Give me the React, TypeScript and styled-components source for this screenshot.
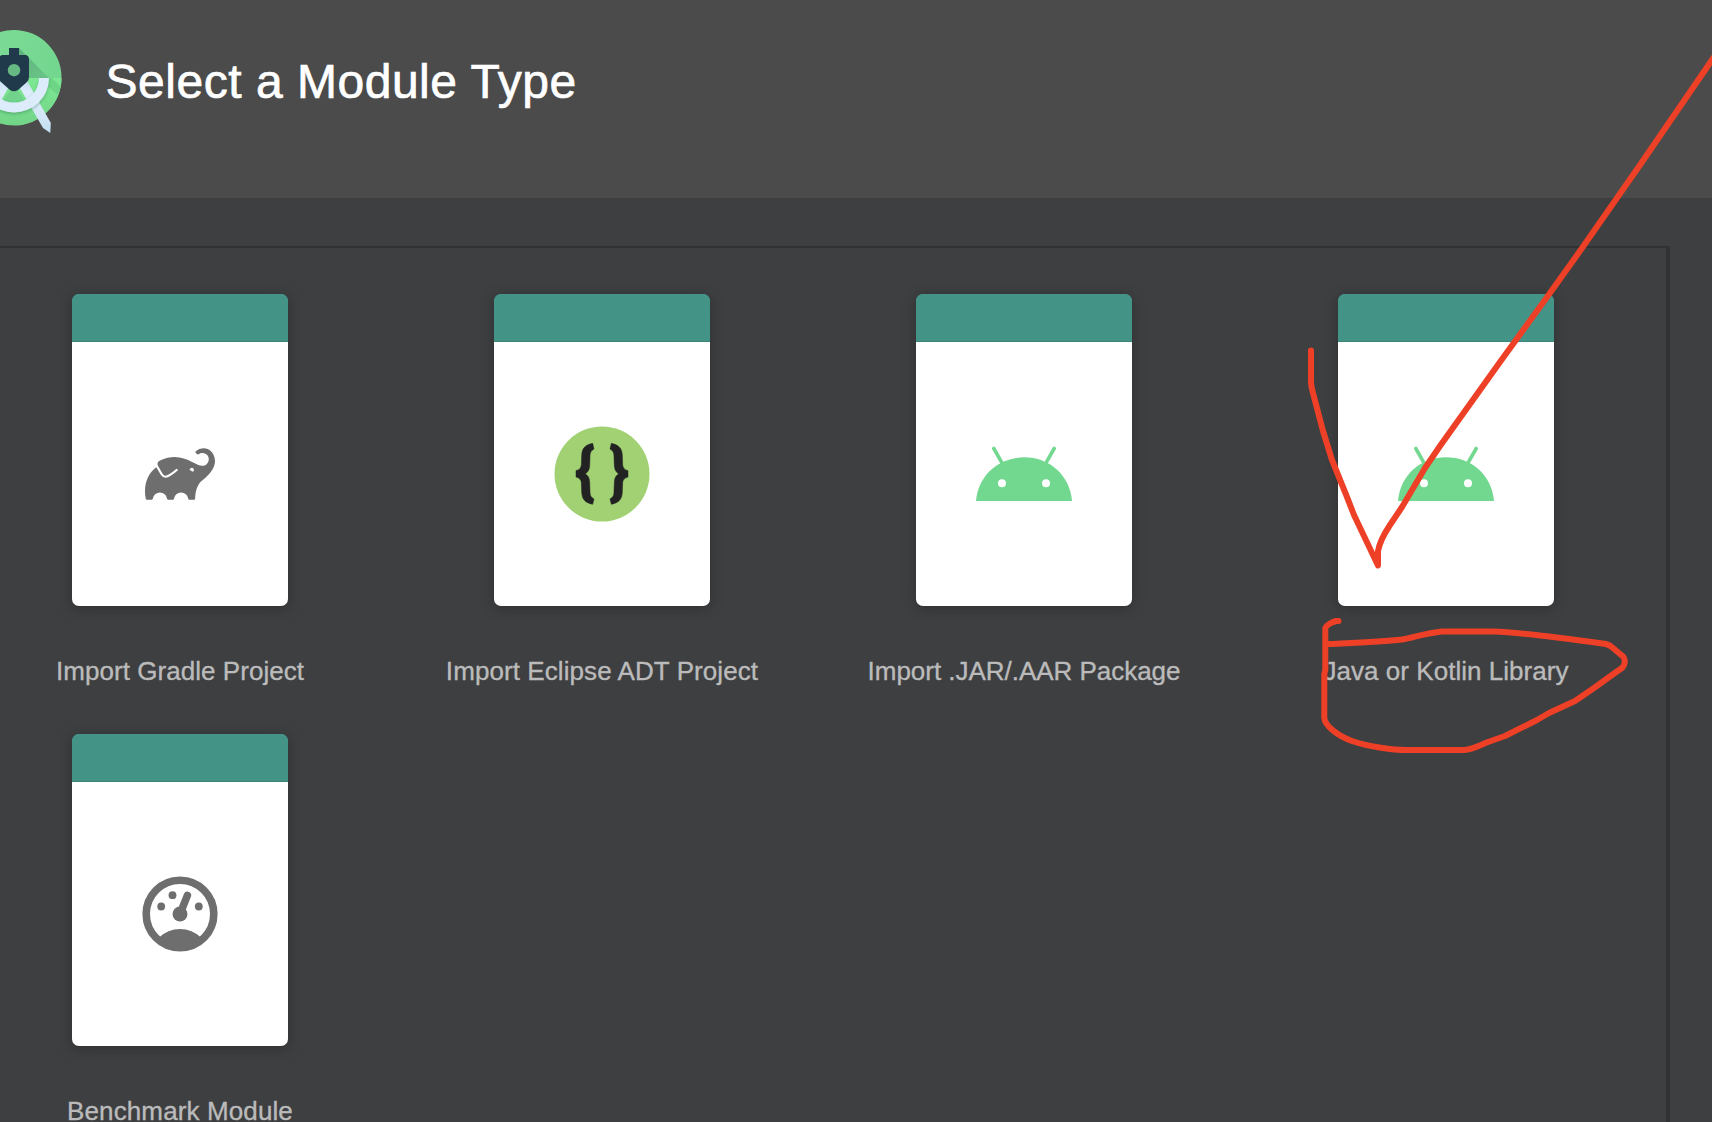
import React from "react";
import styled, { createGlobalStyle } from "styled-components";
import { SiGradle } from "react-icons/si";

const GlobalStyle = createGlobalStyle`
  html, body { margin: 0; background: #3e3f41; overflow: hidden; }
  * { box-sizing: border-box; }
`;

const Window = styled.div`
  position: relative;
  display: flex;
  flex-direction: column;
  width: 1712px;
  height: 1122px;
  overflow: hidden;
  background: #3e3f41;
  font-family: "Liberation Sans", Helvetica, Arial, sans-serif;
`;

const Header = styled.header`
  display: flex;
  flex: none;
  height: 198px;
  background: #4b4b4b;
`;

const Logo = styled.svg`
  flex: none;
  width: 80px;
  height: 140px;
`;

const Title = styled.h1`
  margin: 54px 0 0 25.5px;
  font-size: 48px;
  line-height: 56px;
  font-weight: 400;
  letter-spacing: 0.52px;
  color: #fff;
  white-space: nowrap;
  -webkit-text-stroke: 0.7px #fff;
`;

const Gallery = styled.main`
  flex: none;
  width: 1670px;
  height: 876px;
  margin-top: 48px;
  border-top: 2px solid #313233;
  border-right: 4px solid #313233;
`;

const Grid = styled.div`
  display: grid;
  grid-template-columns: repeat(4, 422px);
  grid-auto-rows: 440px;
  margin-left: -31px;
  padding-top: 46px;
`;

const Module = styled.div`
  display: flex;
  flex-direction: column;
  align-items: center;
`;

const Card = styled.div`
  display: flex;
  flex-direction: column;
  width: 216px;
  height: 312px;
  border-radius: 7px;
  overflow: hidden;
  background: linear-gradient(#439487 48px, #fff 48px);
  box-shadow: 0 2px 14px rgba(0, 0, 0, 0.26);
`;

const CardBar = styled.div`
  flex: none;
  height: 48px;
  background: #439487;
  border-bottom: 1px solid #3c857a;
`;

const CardBody = styled.div`
  flex: 1;
  display: flex;
  align-items: center;
  justify-content: center;
  color: #6e6e6e;
`;

const Label = styled.div<{ $spacing: number }>`
  margin-top: 49px;
  font-size: 26px;
  line-height: 32px;
  letter-spacing: ${(p) => p.$spacing}px;
  color: #bbbbbb;
  white-space: nowrap;
  -webkit-text-stroke: 0.35px #bbbbbb;
`;

const Icon = styled.svg`
  width: 96px;
  height: 96px;
  display: block;
`;

const Ink = styled.svg`
  position: absolute;
  inset: 0;
  width: 1712px;
  height: 1122px;
  pointer-events: none;
`;

const StudioLogo = () => (
  <Logo viewBox="0 0 80 140">
    <defs>
      <linearGradient id="disc" x1="0" y1="0" x2="1" y2="0">
        <stop offset="0.3" stopColor="#7bdb96" />
        <stop offset="1" stopColor="#73d68f" />
      </linearGradient>
      <linearGradient id="lower" x1="0" y1="0" x2="0" y2="1">
        <stop offset="0" stopColor="#7de893" />
        <stop offset="1" stopColor="#73d488" />
      </linearGradient>
      <linearGradient id="cast" x1="0" y1="0" x2="1" y2="1">
        <stop offset="0" stopColor="#5cae79" />
        <stop offset="1" stopColor="#6bc688" />
      </linearGradient>
      <linearGradient id="leg" x1="0" y1="0" x2="0" y2="1">
        <stop offset="0" stopColor="#c6e0f4" />
        <stop offset="0.25" stopColor="#dcecfb" />
        <stop offset="0.6" stopColor="#d6e8f8" />
        <stop offset="1" stopColor="#c0dff0" />
      </linearGradient>
      <filter id="soft" x="-30%" y="-30%" width="160%" height="160%">
        <feDropShadow dx="0" dy="1.5" stdDeviation="1.5" floodColor="#246b42" floodOpacity="0.4" />
      </filter>
    </defs>
    <circle cx="14" cy="77.500" r="47.500" fill="url(#disc)" />
    <path d="M-33.500 78 H61.500 A47.500 47.500 0 0 1 -33.500 78Z" fill="url(#lower)" />
    <path d="M19 48 L49 78 H14 V55Z" fill="url(#cast)" />
    <path d="M49 78 H52 L60.500 86.500 L58 95 L45 84Z" fill="#6ed486" />
    <path d="M14 86 L3 100.500 V103 H25 V100.500Z" fill="#70d28b" />
    <path d="M17 83 L26 79 L50.800 123 L50.300 133 L43 128Z" fill="url(#leg)" />
    <path d="M11 83 L2 79 L-22 123 L-21 133 L-14.500 128Z" fill="url(#leg)" />
    <g filter="url(#soft)">
      <path d="M39 78 H49 A35 34.500 0 0 1 -21 78 H-11 A25 24.500 0 0 0 39 78Z" fill="#dcecfb" />
    </g>
    <path
      fillRule="evenodd"
      fill="#20394b"
      d="M9 48 H19 V55 H25 Q29 55 29 60 V77 Q29 80 27 82 L18 90 Q14 92.500 10 90 L1 82 Q-1 80 -1 77 V60 Q-1 55 3 55 H9Z"
    />
    <circle cx="14" cy="70.200" r="6.200" fill="#67b984" />
  </Logo>
);

const brace =
  "M158 100 C135 105 126 115 125 136 L124 164 C123 175 118 179 108 182 V201 C118 204 123 208 124 218 L125 246 C126 268 135 278 158 283 L162 267 C152 262 150 255 150 243 L149 215 C148 203 144 197 136 191.500 C144 186 148 180 149 168 L150 141 C150 129 152 122 162 117Z";

const EclipseIcon = () => (
  <Icon viewBox="0 0 96 96">
    <circle cx="48" cy="48" r="47.500" fill="#a1d173" />
    <g transform="translate(-14 -16) scale(0.33333)" fill="#222" stroke="#222" strokeWidth="1.500">
      <path d={brace} />
      <path d={brace} transform="translate(372 0) scale(-1 1)" />
    </g>
  </Icon>
);

const AndroidIcon = () => (
  <Icon viewBox="0 0 96 96">
    <path d="M0 75 C2.100 49.500 22.300 31.300 48 31.300 S93.900 49.500 96 75Z" fill="#73d88f" />
    <path d="M17.800 22.500 L26 36.800 M78.200 22.500 L70 36.800" stroke="#73d88f" strokeWidth="3.600" strokeLinecap="round" />
    <circle cx="26" cy="57.300" r="4" fill="#fff" />
    <circle cx="70" cy="57.300" r="4" fill="#fff" />
  </Icon>
);

const GaugeIcon = () => (
  <Icon viewBox="0 0 96 96" fill="currentColor">
    <defs>
      <clipPath id="dial">
        <circle cx="48" cy="48" r="36" />
      </clipPath>
    </defs>
    <circle cx="48" cy="48" r="33.800" fill="none" stroke="currentColor" strokeWidth="7.600" />
    <circle cx="48" cy="93" r="30" clipPath="url(#dial)" />
    <circle cx="29.200" cy="40.500" r="3.900" />
    <circle cx="40.500" cy="29.200" r="3.900" />
    <circle cx="66.800" cy="40.500" r="3.900" />
    <circle cx="48" cy="48" r="7.500" />
    <path d="M48 48 L55.400 29.400" stroke="currentColor" strokeWidth="7.500" strokeLinecap="round" />
  </Icon>
);

const modules = [
  { name: "Import Gradle Project", icon: <SiGradle size={70} />, spacing: 0.05 },
  { name: "Import Eclipse ADT Project", icon: <EclipseIcon />, spacing: 0.08 },
  { name: "Import .JAR/.AAR Package", icon: <AndroidIcon />, spacing: -0.03 },
  { name: "Java or Kotlin Library", icon: <AndroidIcon />, spacing: 0.03 },
  { name: "Benchmark Module", icon: <GaugeIcon />, spacing: 0.12 },
];

export default function App() {
  return (
    <Window>
      <GlobalStyle />
      <Header>
        <StudioLogo />
        <Title>Select a Module Type</Title>
      </Header>
      <Gallery>
        <Grid>
          {modules.map((m) => (
            <Module key={m.name}>
              <Card>
                <CardBar />
                <CardBody>{m.icon}</CardBody>
              </Card>
              <Label $spacing={m.spacing}>{m.name}</Label>
            </Module>
          ))}
        </Grid>
      </Gallery>
      <Ink viewBox="0 0 1712 1122" fill="none" stroke="#ee4026" strokeWidth="6" strokeLinecap="round" strokeLinejoin="round">
        <path d="M1311 350.500 V383 Q1311.500 388 1313 393 L1323 431 L1332 460 L1347 497 L1354 515 L1378 565.500 V551 Q1380 540 1390 525 L1402 507 L1425 468 L1440 446 L1500 362 L1550 293 L1580 251 L1640 165 L1714 57" />
        <path d="M1338.500 621 H1336 C1332 622 1326.500 625 1325.300 628 V670 L1324.300 674 V718 C1325 726 1338 736 1352 741 C1370 747 1393 750 1406 750 H1463 C1472 750 1480 745 1488 742 L1505 736 L1525 726 L1537 720 L1549 713 L1575 701 L1594 688 L1612 675 L1622 668 Q1624.800 665 1624.800 661 Q1624.800 657 1620 654 L1613 648 Q1610 645 1606 644 C1570 639 1520 632 1494 631.500 H1442 C1425 633 1413 638 1402 639.500 C1380 642 1350 643 1329 644" />
      </Ink>
    </Window>
  );
}
